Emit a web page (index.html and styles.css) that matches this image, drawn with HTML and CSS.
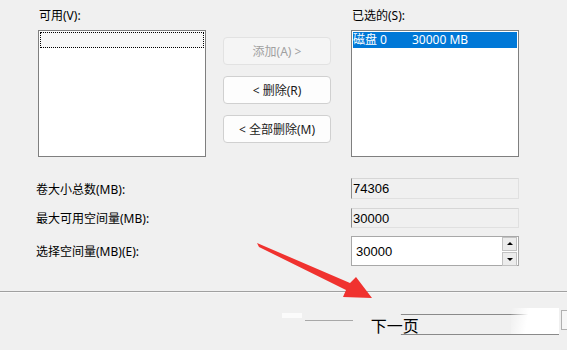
FILE: index.html
```html
<!DOCTYPE html>
<html lang="zh-CN">
<head>
    <meta charset="UTF-8">
    <title>选择磁盘</title>
    <link rel="stylesheet" href="styles.css">
</head>
<body>
    <div class="dialog">
        <!-- Disk pickers -->
        <div class="pick">
            <div class="list-col">
                <div class="cap">可用(V):</div>
                <div class="listbox">
                    <div class="focus-row"></div>
                </div>
            </div>
            <div class="btn-col">
                <button class="btn" disabled>添加(A) &gt;</button>
                <button class="btn">&lt; 删除(R)</button>
                <button class="btn">&lt; 全部删除(M)</button>
            </div>
            <div class="list-col">
                <div class="cap">已选的(S):</div>
                <div class="listbox">
                    <div class="sel-row"><span class="disk">磁盘 0</span><span>30000 MB</span></div>
                </div>
            </div>
        </div>

        <!-- Sizes -->
        <div class="sizes">
            <div class="lbl">卷大小总数(MB):</div>
            <div class="field ro r1">74306</div>
            <div class="lbl">最大可用空间量(MB):</div>
            <div class="field ro r2">30000</div>
            <div class="lbl">选择空间量(MB)(E):</div>
            <div class="field spin">
                <span class="spin-val">30000</span>
                <span class="spin-btns">
                    <span class="sb up"></span>
                    <span class="sb down"></span>
                </span>
            </div>
        </div>
    </div>

    <div class="sep"></div>

    <div class="footer">
        <div class="ghost"></div>
        <div class="ghost-line"></div>
        <div class="next-btn">
            <span class="next-text">下一页</span>
            <span class="fade"></span>
        </div>
        <div class="edge"></div>
    </div>

    <!-- red pointer drawn on top of the screenshot -->
    <svg class="arrow" width="567" height="350" viewBox="0 0 567 350">
        <polygon points="257,243 350,283 356,277 372,298 343,297 346,290 259,247" fill="#f0322f"/>
    </svg>
</body>
</html>
```

FILE: styles.css
```css
/* Base */
body {
    margin: 0;
    background: #f0f0f0;
    font-family: "Noto Sans", "Noto Sans CJK SC", sans-serif;
    font-size: 12px;
    color: #000;
    width: 567px;
    height: 350px;
    overflow: hidden;
    position: relative;
}

/* Pickers */
.pick {
    display: flex;
    padding: 8px 0 0 38px;
}

.list-col {
    width: 168px;
}

.list-col + .btn-col + .list-col {
    width: 168px;
}

.cap {
    height: 16px;
    line-height: 16px;
    margin-bottom: 6px;
    padding-left: 1px;
}

.listbox {
    height: 123px;
    background: #fff;
    border: 1px solid #7f7f7f;
    padding: 1px;
}

.focus-row {
    height: 14px;
    border: 1px dotted #000;
    background: #f7f7f7;
}

.sel-row {
    height: 16px;
    line-height: 16px;
    background: #0078d7;
    color: #fff;
    display: flex;
}

.disk {
    width: 59px;
}

.btn-col {
    display: flex;
    flex-direction: column;
    gap: 11px;
    width: 108px;
    margin: 29px 20px 0 17px;
}

.btn {
    height: 28px;
    background: #fdfdfd;
    border: 1px solid #d0d0d0;
    border-radius: 4px;
    font-family: inherit;
    font-size: 12px;
    color: #1a1a1a;
    padding: 0;
}

.btn:disabled {
    background: #f5f5f5;
    border-color: #e2e2e2;
    color: #a0a0a0;
}

/* Sizes */
.sizes {
    display: grid;
    grid-template-columns: 315px 168px;
    row-gap: 9px;
    align-items: center;
    margin: 21px 0 0 36px;
}

.field {
    box-sizing: border-box;
    font-family: "Liberation Sans", sans-serif;
    font-size: 13px;
}

.ro {
    height: 21px;
    line-height: 19px;
    padding-left: 1px;
    border: 1px solid #e0e0e0;
    border-left-color: #8c8c8c;
    border-top-color: #d6d6d6;
}

.r2 {
    height: 20px;
    margin-bottom: -1px;
}

.spin {
    height: 30px;
    background: #fff;
    border: 1px solid #a8a8a8;
    display: flex;
    align-items: center;
    justify-content: space-between;
    padding-left: 4px;
}

.spin-btns {
    display: flex;
    flex-direction: column;
    gap: 1px;
    margin-right: 1px;
}

.sb {
    width: 13px;
    height: 12px;
    background: #ececec;
    border: 1px solid #c2c2c2;
    position: relative;
}

.sb::after {
    content: "";
    position: absolute;
    left: 4px;
    border-left: 3px solid transparent;
    border-right: 3px solid transparent;
}

.up::after {
    top: 4px;
    border-bottom: 3px solid #000;
}

.down::after {
    top: 5px;
    border-top: 3px solid #000;
}

/* Separator + footer */
.sep {
    margin-top: 25px;
    height: 1px;
    background: #a0a0a0;
    border-bottom: 1px solid #f8f8f8;
}

.footer {
    display: flex;
    align-items: flex-start;
    padding-top: 14px;
}

.ghost {
    width: 20px;
    height: 5px;
    margin: 6px 0 0 282px;
    background: #fbfbfb;
}

.ghost-line {
    width: 48px;
    height: 1px;
    margin: 13px 0 0 3px;
    background: #a8a8a8;
}

.next-btn {
    position: relative;
    width: 204px;
    height: 19px;
    margin: 7px 0 0 3px;
    border-top: 1px solid #c0c0c0;
    border-bottom: 1px solid #8a8a8a;
    border-image: linear-gradient(90deg, #f0f0f0 0, #f0f0f0 45px, #8a8a8a 46px) 1;
}

.next-text {
    position: absolute;
    left: 15px;
    top: 1px;
    font-family: "Noto Sans CJK SC", sans-serif;
    font-size: 16px;
    line-height: 18px;
}

.fade {
    position: absolute;
    right: 0;
    top: -7px;
    width: 48px;
    height: 26px;
    background: linear-gradient(100deg, rgba(255,255,255,0) 0, #fff 35%);
}

.edge {
    width: 5px;
    height: 18px;
    margin: 3px 0 0 2px;
    border: 1px solid #b0b0b0;
    border-right: none;
    background: #f6f6f6;
}

.arrow {
    position: absolute;
    left: 0;
    top: 0;
}
```
